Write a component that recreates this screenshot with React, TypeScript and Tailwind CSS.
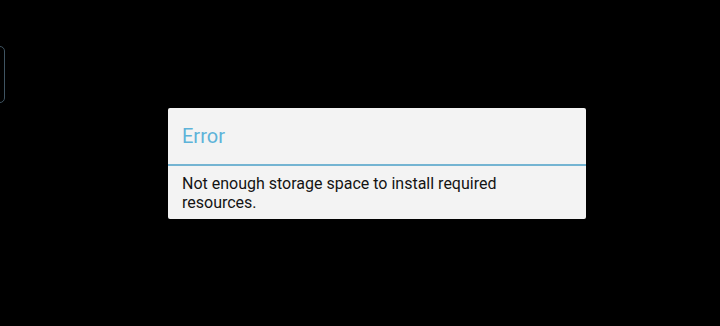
import React from 'react';

export default function App() {
    return (
        <div className="relative flex h-[326px] w-[720px] items-center overflow-hidden bg-black font-['Roboto',sans-serif]">
            {/* Partially visible control at the left edge */}
            <div className="absolute left-[-40px] top-[46px] h-[57px] w-[45px] rounded-[5px] border border-[#3f5462]" />

            <div className="ml-[168px] w-[418px] rounded-[2px] bg-[#f3f3f3]">
                <div className="flex h-[56px] items-center pl-[14px]">
                    <span className="text-[20px] leading-none text-[#5eb3d9]">Error</span>
                </div>
                <div className="h-[2px] bg-[#74b4d2]" />
                <p className="pl-[14px] pr-[70px] pt-[8px] pb-[7px] text-[16px] leading-[19px] text-[#141414]">
                    Not enough storage space to install required resources.
                </p>
            </div>
        </div>
    );
}
